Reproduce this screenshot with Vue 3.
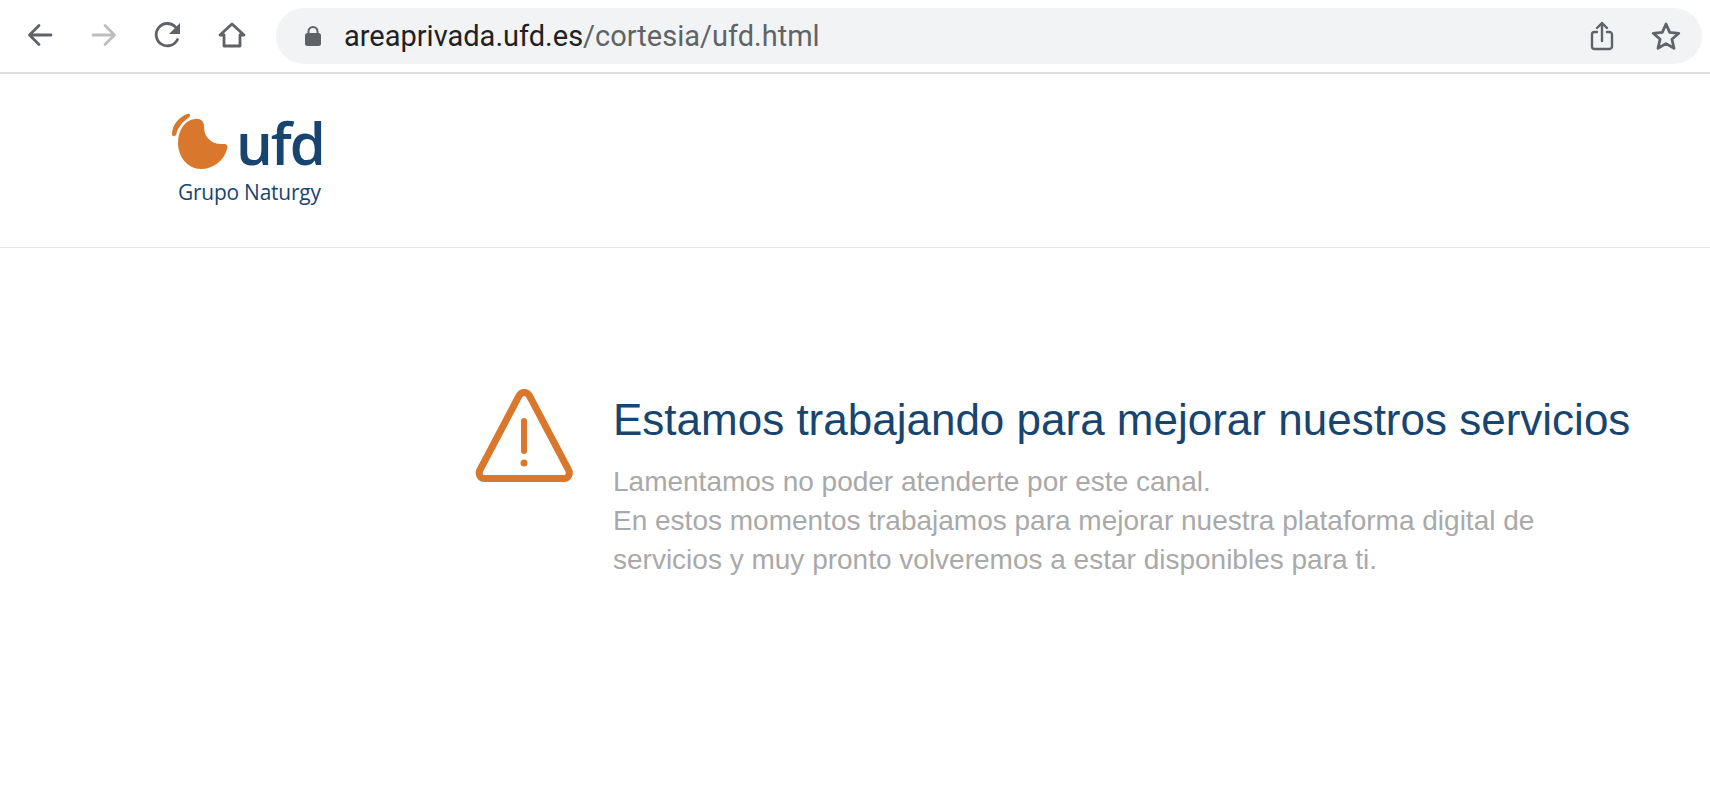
<template>
  <div class="page">
    <header class="toolbar">
      <div class="nav-icons">
        <svg class="nav-icon" viewBox="0 0 32 32"><path d="M27 16H6M15 6.500 5.500 16l9.500 9.500" fill="none" stroke="#5f6368" stroke-width="2.800" stroke-linecap="round" stroke-linejoin="round"/></svg>
        <svg class="nav-icon" viewBox="0 0 32 32"><path d="M5 16h21M17 6.500l9.500 9.500-9.500 9.500" fill="none" stroke="#bdbdbd" stroke-width="2.800" stroke-linecap="round" stroke-linejoin="round"/></svg>
        <svg class="nav-icon" viewBox="0 0 32 32"><path d="M25.500 20.500A11.200 11.200 0 1 1 23.500 8" fill="none" stroke="#5f6368" stroke-width="2.800" stroke-linecap="round"/><path d="M28 4v11H17z" fill="#5f6368"/></svg>
        <svg class="nav-icon" viewBox="0 0 32 32"><path d="M4 16 16 5l12 11h-4v11H8V16z" fill="none" stroke="#5f6368" stroke-width="2.800" stroke-linejoin="round"/></svg>
      </div>
      <div class="address">
        <svg class="lock" viewBox="0 0 18 22"><path d="M4.500 9V6.500a4.500 4.500 0 0 1 9 0V9" fill="none" stroke="#5f6368" stroke-width="2"/><rect x="1" y="8" width="16" height="13" rx="2.500" fill="#5f6368"/></svg>
        <span class="url"><span class="host">areaprivada.ufd.es</span>/cortesia/ufd.html</span>
        <svg class="addr-icon" viewBox="0 0 32 32"><path d="M11 12H8.500A2.500 2.500 0 0 0 6 14.500v12A2.500 2.500 0 0 0 8.500 29h15a2.500 2.500 0 0 0 2.500-2.500v-12a2.500 2.500 0 0 0-2.500-2.500H21M16 21V3M11 8l5-5 5 5" fill="none" stroke="#5f6368" stroke-width="2.400" stroke-linecap="round" stroke-linejoin="round"/></svg>
        <svg class="addr-icon star" viewBox="0 0 32 32"><path d="m16 4 3.700 8.400 9.100.9-6.900 6 2.100 9L16 23.600l-8 4.700 2.100-9-6.900-6 9.100-.9z" fill="none" stroke="#5f6368" stroke-width="2.800" stroke-linejoin="round"/></svg>
      </div>
    </header>

    <div class="site-header">
      <div class="logo">
        <div class="logo-top">
          <svg class="moon" viewBox="0 0 60 60"><path d="M2 22C2 13 9 5 17 2c3-1 4 2 2 3.500C13 9.500 8 15 6.500 21.500c-.5 3.500-4.500 3.500-4.500.5z" fill="#d9782d"/><path d="M25 7c5-1 9 2 9 7 0 8 3 12 7 15 4 3 9 3 13 3 3 0 4 2 3 5-3 12-14 20-26 20C18 57 8 45 8 31 8 18 15 8 25 7z" fill="#d9782d"/></svg>
          <span class="logo-name">ufd</span>
        </div>
        <span class="logo-group">Grupo Naturgy</span>
      </div>
    </div>

    <main class="notice">
      <svg class="warning" viewBox="0 0 104 104"><path d="M50 7.500c2.500 0 4.300 1.200 5.500 3.400l39 74c2 3.900 0 8.600-4.500 8.600H10.500c-4.500 0-6.500-4.700-4.500-8.600l39-74c1.200-2.200 2.500-3.400 5-3.400z" fill="none" stroke="#d9782d" stroke-width="7" stroke-linejoin="round"/><path d="M50 36v30" stroke="#d9782d" stroke-width="6" stroke-linecap="round"/><circle cx="50" cy="78" r="3.500" fill="#d9782d"/></svg>
      <div class="notice-text">
        <h1>Estamos trabajando para mejorar nuestros servicios</h1>
        <p>Lamentamos no poder atenderte por este canal.<br>En estos momentos trabajamos para mejorar nuestra plataforma digital de servicios y muy pronto volveremos a estar disponibles para ti.</p>
      </div>
    </main>
  </div>
</template>

<script setup>
</script>

<style>
html, body {
  background: #fff;
  overflow: hidden;
}
</style>

<style scoped>
.page {
  height: 804px;
  font-family: "Liberation Sans", Arial, sans-serif;
}

.toolbar {
  box-sizing: border-box;
  height: 74px;
  border-bottom: 2px solid #dedede;
  display: flex;
  align-items: center;
  padding: 0 8px 0 24px;
}

.nav-icons {
  display: flex;
  gap: 32px;
  width: 252px;
  margin-top: -2px;
}

.nav-icon {
  width: 32px;
  height: 32px;
}

.address {
  flex: 1;
  height: 56px;
  border-radius: 28px;
  background: #f1f3f4;
  display: flex;
  align-items: center;
  padding: 0 20px 0 28px;
}

.lock {
  width: 18px;
  height: 22px;
}

.url {
  flex: 1;
  margin-left: 22px;
  font-family: Roboto, sans-serif;
  font-size: 29px;
  color: #5f6368;
}

.host {
  color: #202124;
}

.addr-icon {
  width: 32px;
  height: 32px;
}

.star {
  margin-left: 32px;
}

.site-header {
  box-sizing: border-box;
  height: 174px;
  border-bottom: 1px solid #e6e6e6;
  padding: 38px 0 0 170px;
}

.logo {
  width: 170px;
  display: flex;
  flex-direction: column;
}

.logo-top {
  display: flex;
  align-items: flex-end;
  gap: 6px;
  height: 60px;
}

.moon {
  width: 60px;
  height: 60px;
  flex: none;
}

.logo-name {
  display: block;
  font-family: "Open Sans", sans-serif;
  font-size: 58px;
  line-height: 58px;
  font-weight: 600;
  letter-spacing: -2px;
  color: #17456f;
}

.logo-group {
  margin: 9px 0 0 8px;
  font-family: "Open Sans", sans-serif;
  font-size: 20.900px;
  line-height: 22px;
  font-weight: 500;
  letter-spacing: -0.2px;
  color: #17456f;
}

.notice {
  display: flex;
  padding: 137px 0 0 474px;
}

.warning {
  width: 104px;
  height: 104px;
  flex: none;
}

.notice-text {
  margin: 11px 0 0 35px;
  width: 940px;
}

h1 {
  margin: 0;
  font-size: 44px;
  line-height: 48px;
  font-weight: 400;
  color: #17456f;
  white-space: nowrap;
}

p {
  margin: 18px 0 0;
  font-size: 28px;
  line-height: 39px;
  color: #a9a9a9;
}
</style>
